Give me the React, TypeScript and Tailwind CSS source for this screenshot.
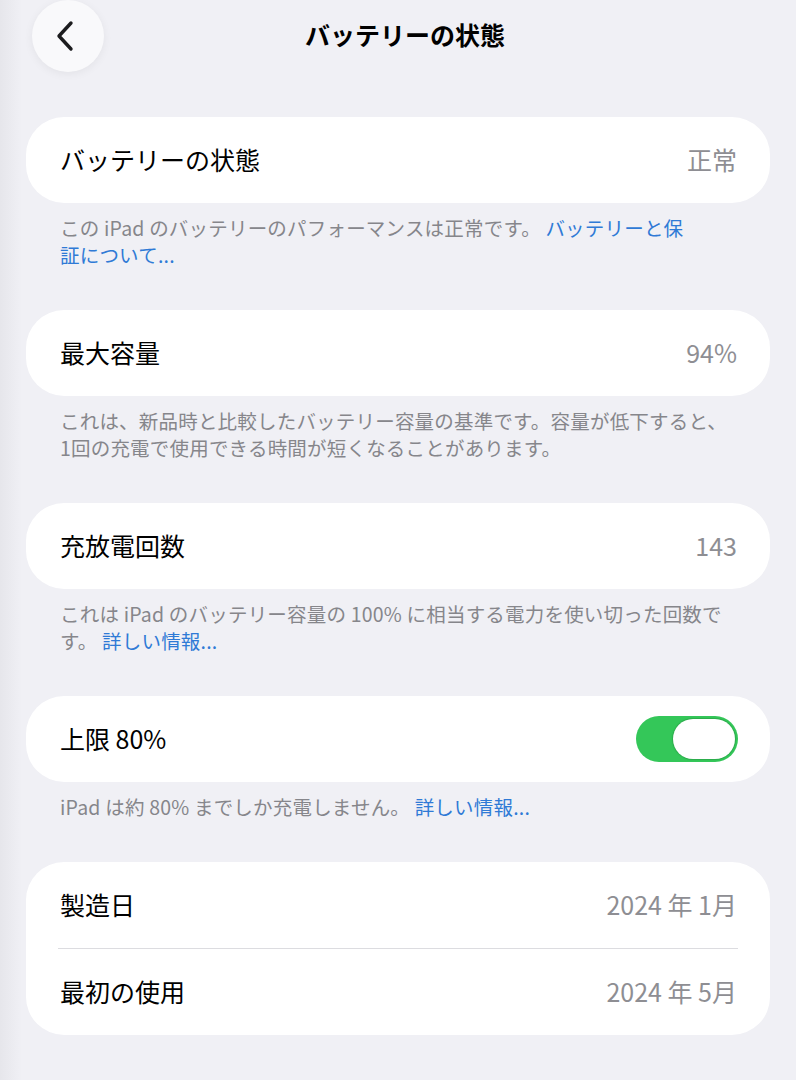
import React, { useState } from "react";

const font = "font-['Noto_Sans_CJK_JP','Noto_Sans_CJK_SC',sans-serif]";

function Row({ label, value }: { label: string; value?: string }) {
  return (
    <div className="h-[86px] flex items-center justify-between pl-[34px] pr-[33px]">
      <span className="text-[25px] text-black">{label}</span>
      {value && <span className="text-[25px] text-[#8e8e93]">{value}</span>}
    </div>
  );
}

function Footer({ children }: { children: React.ReactNode }) {
  return (
    <p className="mt-[11px] pl-[34px] pr-[20px] text-[19.5px] tracking-[0.2px] leading-[27px] text-[#86868b]">
      {children}
    </p>
  );
}

function Link({ children }: { children: React.ReactNode }) {
  return <span className="text-[#2f7ad6]">{children}</span>;
}

function Toggle() {
  const [on, setOn] = useState(true);
  return (
    <button
      onClick={() => setOn((v) => !v)}
      className={`w-[102px] h-[46px] rounded-full p-[3px] flex items-center ${on ? "bg-[#34c759] justify-end" : "bg-[#e5e5ea] justify-start"}`}
    >
      <span className="block w-[62px] h-[40px] rounded-full bg-white shadow-[0_0_1px_1px_rgba(30,120,50,0.35)]" />
    </button>
  );
}

export default function App() {
  return (
    <div className={`${font} min-h-[1080px] w-full bg-[linear-gradient(to_right,#e6e6eb,#f0f0f5_22px)]`}>
      <header className="h-[72px] relative flex items-center justify-center">
        <button className="absolute left-[32px] top-0 w-[72px] h-[72px] rounded-full bg-[#f9f9fb] shadow-[0_2px_10px_rgba(0,0,0,0.06)] flex items-center justify-center">
          <svg width="20" height="32" viewBox="0 0 20 32" fill="none" className="-ml-[4px]">
            <path d="M15 3 L3 16 L15 29" stroke="#1c1c1e" strokeWidth="3.4" strokeLinecap="round" strokeLinejoin="round" />
          </svg>
        </button>
        <h1 className="text-[25px] font-bold text-black pl-[14px] -mt-[2px]">バッテリーの状態</h1>
      </header>

      <main className="px-[26px] pt-[45px] pb-[44px] flex flex-col gap-[42px]">
        <section>
          <div className="bg-white rounded-[38px]">
            <Row label="バッテリーの状態" value="正常" />
          </div>
          <Footer>
            この iPad のバッテリーのパフォーマンスは正常です。 <Link>バッテリーと保</Link>
            <br />
            <Link>証について...</Link>
          </Footer>
        </section>

        <section>
          <div className="bg-white rounded-[38px]">
            <Row label="最大容量" value="94%" />
          </div>
          <Footer>
            これは、新品時と比較したバッテリー容量の基準です。容量が低下すると、
            <br />
            1回の充電で使用できる時間が短くなることがあります。
          </Footer>
        </section>

        <section>
          <div className="bg-white rounded-[38px]">
            <Row label="充放電回数" value="143" />
          </div>
          <Footer>
            これは iPad のバッテリー容量の 100% に相当する電力を使い切った回数で
            <br />
            す。 <Link>詳しい情報...</Link>
          </Footer>
        </section>

        <section>
          <div className="bg-white rounded-[38px] h-[86px] flex items-center justify-between pl-[34px] pr-[32px]">
            <span className="text-[25px] text-black">上限 80%</span>
            <Toggle />
          </div>
          <Footer>
            iPad は約 80% までしか充電しません。 <Link>詳しい情報...</Link>
          </Footer>
        </section>

        <section>
          <div className="bg-white rounded-[38px]">
            <Row label="製造日" value="2024 年 1月" />
            <div className="ml-[32px] mr-[32px] h-px bg-[#dcdce0]" />
            <Row label="最初の使用" value="2024 年 5月" />
          </div>
        </section>
      </main>
    </div>
  );
}
